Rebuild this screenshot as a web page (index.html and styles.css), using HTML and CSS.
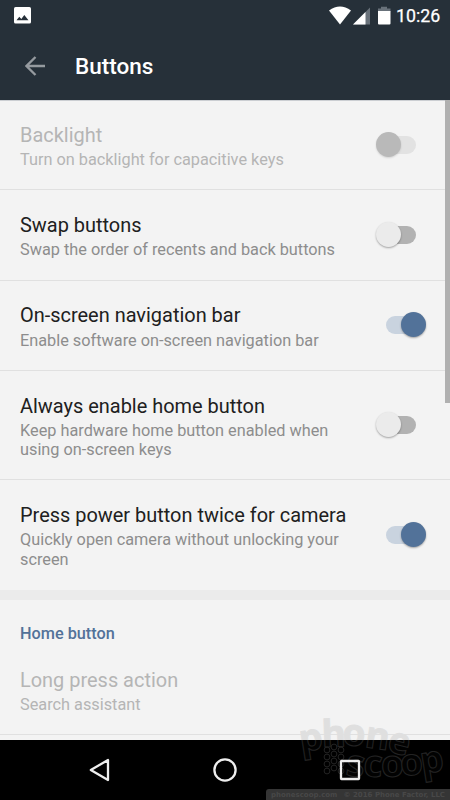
FILE: index.html
```html
<!DOCTYPE html>
<html lang="en">
<head>
<meta charset="utf-8">
<title>Buttons</title>
<link rel="stylesheet" href="styles.css">
</head>
<body>
<div class="phone">
  <header>
    <div class="status">
      <svg class="photo" width="17" height="17" viewBox="0 0 17 17"><rect width="17" height="16.5" rx="1.6" fill="#fff"/><path d="M2.5 13.3 5.3 9.8l2 2.3 3-4 4.2 5.2z" fill="#263039"/></svg>
      <svg class="signals" width="64" height="22" viewBox="0 0 64 22">
        <path d="M0 4.5Q11-3.5 22 4.5L11 18.5z" fill="#fff"/>
        <path d="M24 18.5 41 1.5v17z" fill="#68717a"/><path d="M24 18.5 36.5 6v12.5z" fill="#fff"/>
        <path d="M49 2.5h3V.8h6v1.7h3.5v3H49z" fill="#68717a"/><path d="M49 5h12.5v12.5a1 1 0 0 1-1 1H50a1 1 0 0 1-1-1z" fill="#fff"/>
      </svg>
      <span class="clock">10:26</span>
    </div>
    <div class="toolbar">
      <svg width="20" height="20" viewBox="0 0 20 20" fill="none" stroke="#959a9f" stroke-width="2.3"><path d="M20 10H2M10.5 1 1.5 10l9 9"/></svg>
      <h1>Buttons</h1>
    </div>
  </header>
  <main>
    <section class="row disabled"><div class="copy"><h2>Backlight</h2><p>Turn on backlight for capacitive keys</p></div><i class="switch"></i></section>
    <section class="row"><div class="copy"><h2>Swap buttons</h2><p>Swap the order of recents and back buttons</p></div><i class="switch"></i></section>
    <section class="row"><div class="copy"><h2>On-screen navigation bar</h2><p>Enable software on-screen navigation bar</p></div><i class="switch on"></i></section>
    <section class="row tall"><div class="copy"><h2>Always enable home button</h2><p>Keep hardware home button enabled when<br>using on-screen keys</p></div><i class="switch"></i></section>
    <section class="row tall last"><div class="copy"><h2>Press power button twice for camera</h2><p>Quickly open camera without unlocking your<br>screen</p></div><i class="switch on"></i></section>
    <div class="gap"></div>
    <h3>Home button</h3>
    <section class="row disabled action"><div class="copy"><h2>Long press action</h2><p>Search assistant</p></div></section>
    <div class="scrollbar"></div>
  </main>
  <nav>
    <svg width="22" height="26" viewBox="0 0 22 26"><path d="M1.8 13 19 3v20z"/></svg>
    <svg width="24" height="26" viewBox="0 0 24 26"><circle cx="12" cy="13" r="10.6"/></svg>
    <svg width="22" height="26" viewBox="0 0 22 26"><rect x="2" y="4" width="18" height="18" rx=".5"/></svg>
  </nav>
  <svg class="watermark" width="150" height="82" viewBox="0 0 150 82">
    <defs>
      <linearGradient id="fill" gradientUnits="userSpaceOnUse" x1="0" y1="0" x2="0" y2="82">
        <stop offset=".2683" stop-color="#dfdfdf"/><stop offset=".2683" stop-color="#020202"/>
      </linearGradient>
      <linearGradient id="edge" gradientUnits="userSpaceOnUse" x1="0" y1="0" x2="0" y2="82">
        <stop offset=".2683" stop-color="#dfdfdf"/><stop offset=".2683" stop-color="#232323"/>
      </linearGradient>
    </defs>
    <g fill="url(#fill)" stroke="url(#edge)" stroke-width="1">
      <text x="1 22 42 64 86" y="34 29 27 29 33" rotate="-9 -2 3 8 14" class="brand">phone</text>
      <text x="45 63 81 101 122" y="57 58 59 58 56" rotate="8 3 0 -5 -9" class="brand">scoop</text>
      <g fill="none"><circle cx="27" cy="32" r="2.9"/><circle cx="34" cy="29" r="2.9"/><circle cx="41" cy="32" r="2.9"/><circle cx="27" cy="39" r="2.9"/><circle cx="34" cy="36" r="2.9"/><circle cx="41" cy="39" r="2.9"/><circle cx="27" cy="46" r="2.9"/><circle cx="34" cy="43" r="2.9"/><circle cx="41" cy="46" r="2.9"/><circle cx="27" cy="53" r="2.9"/><circle cx="34" cy="50" r="2.9"/><circle cx="41" cy="53" r="2.9"/></g>
    </g>
  </svg>
  <div class="copyright"><span>phonescoop.com</span><span>© 2016 Phone Factor, LLC</span></div>
</div>
</body>
</html>
```
FILE: styles.css
```css
* { box-sizing: border-box; }
body { margin: 0; font-family: Roboto, sans-serif; }
h1, h2, h3, p { margin: 0; }
.phone { position: relative; width: 450px; height: 800px; overflow: hidden; display: flex; flex-direction: column; background: #f3f3f3; }
header { height: 100px; background: #263039; color: #fff; }
.status { height: 31px; display: flex; align-items: flex-start; padding: 7px 10px 0 14px; }
.signals { margin: -1px 3px 0 auto; }
.clock { width: 44px; font-size: 17.8px; font-weight: 400; line-height: 18px; -webkit-text-stroke: .25px #fff; }
.toolbar { height: 69px; display: flex; align-items: center; padding-left: 25px; gap: 30px; }
h1 { font-size: 22.5px; font-weight: 500; line-height: 30px; }
main { position: relative; height: 640px; box-shadow: inset 0 1px #cbced2; overflow: hidden; }
.row { height: 90.3px; display: flex; align-items: center; padding: 0 24px 0 20px; border-bottom: 1px solid #e0e0e0; }
.tall { height: 109.5px; }
.last { border-bottom: 0; height: 110px; }
.last .copy { padding-top: 1.5px; }
.copy { flex: 1; white-space: nowrap; padding-top: 3px; }
h2 { font-size: 19.95px; font-weight: 400; line-height: 24px; color: #202020; }
p { font-size: 16.3px; line-height: 19.3px; margin-top: 3.3px; color: #8d8d8d; }
.disabled h2, .disabled p { color: #b5b5b5; }
.switch { position: relative; width: 50px; height: 26px; }
.switch::before { content: ""; position: absolute; left: 10px; top: 4px; width: 30px; height: 18px; border-radius: 9px; background: #b2b2b2; }
.switch::after { content: ""; position: absolute; left: 0; top: 0; width: 25px; height: 25px; border-radius: 50%; background: #ebebeb; box-shadow: 0 1px 2px #0005; }
.on::before { background: #c9d3df; }
.on::after { left: 25px; background: #527299; }
.disabled .switch::before { background: #e2e2e2; }
.disabled .switch::after { background: #b9b9b9; box-shadow: 0 1px 2px #0002; }
.gap { height: 10px; background: #ebebeb; }
h3 { height: 44px; padding: 24px 20px 0; font-size: 16.25px; line-height: 20px; font-weight: 500; color: #527299; }
.action { height: 91px; }
.action .copy { padding-top: 3px; }
.scrollbar { position: absolute; right: 0; top: 0; width: 5px; height: 303px; background: #b0b0b0; }
nav { height: 60px; background: #000; display: flex; align-items: center; padding: 0 89px; justify-content: space-between; }
nav svg { position: relative; z-index: 1; fill: none; stroke: #eee; stroke-width: 2.3; stroke-linejoin: round; }
.watermark { position: absolute; left: 300px; top: 718px; }
.brand { font: 700 37px "Open Sans", sans-serif; }
.copyright { position: absolute; left: 266px; top: 789px; width: 184px; height: 11px; padding: 2px 5px; display: flex; justify-content: space-between; border-radius: 3px 0 0; background: #353535; color: #484848; font: 700 7px/9px "DejaVu Sans", sans-serif; white-space: nowrap; }
```
